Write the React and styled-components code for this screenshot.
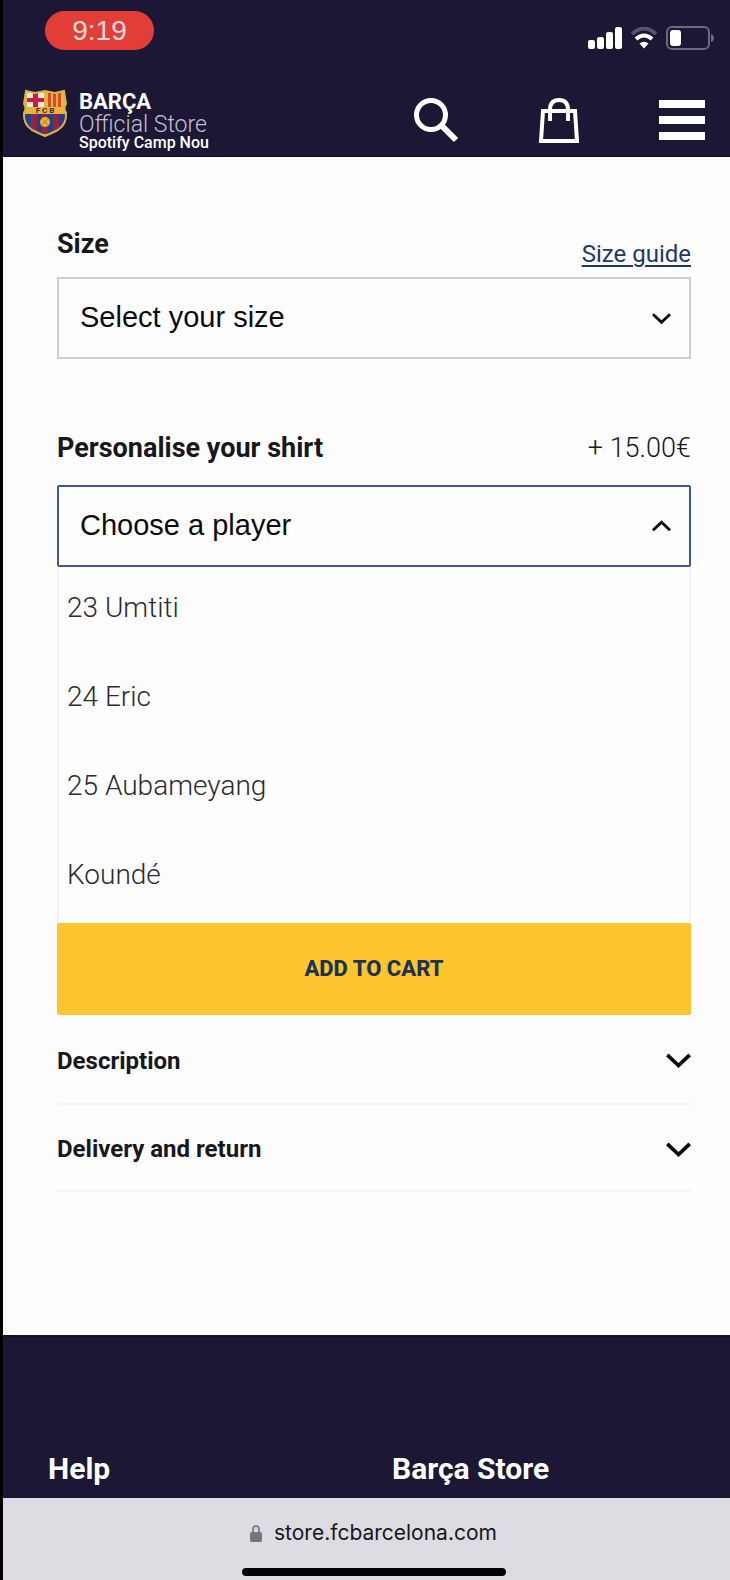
import React, { useState } from "react";
import styled, { createGlobalStyle } from "styled-components";

const GlobalStyle = createGlobalStyle`
  *, *::before, *::after { box-sizing: border-box; }
  body { margin: 0; background: #fefdfe; }
  button, select { font: inherit; color: inherit; border-radius: 0; }
  h2, p, ul { margin: 0; padding: 0; }
`;

const Page = styled.div`
  display: flex;
  flex-direction: column;
  min-height: 100vh;
  border-left: 3px solid #000;
  font-family: Roboto, "Liberation Sans", sans-serif;
  color: #17171c;
`;

const Header = styled.header`
  background: #1b1735;
  color: #fff;
  border-bottom: 1px solid #0d0a22;
`;

const StatusBar = styled.div`
  display: flex;
  justify-content: space-between;
  align-items: flex-end;
  padding: 11px 16px 0 42px;
`;

const Clock = styled.div`
  width: 109px;
  height: 39px;
  border-radius: 20px;
  background: #e33d37;
  color: #ffdcd8;
  font: 500 28px/39px "Liberation Sans", Arial, sans-serif;
  text-align: center;
`;

const StatusIcons = styled.div`
  display: flex;
  align-items: center;
  gap: 8px;
  svg { display: block; }
`;

const NavBar = styled.div`
  display: flex;
  justify-content: space-between;
  align-items: center;
  padding: 38px 25px 4px 18px;
`;

const Brand = styled.a`
  display: flex;
  align-items: flex-start;
  gap: 10px;
  color: inherit;
  text-decoration: none;
`;

const BrandText = styled.span`
  display: flex;
  flex-direction: column;
`;

const BrandLine = styled.span`
  font-size: ${(p) => p.$size}px;
  font-weight: ${(p) => p.$weight};
  line-height: ${(p) => p.$line}px;
  color: ${(p) => p.$color || "#fff"};
  white-space: nowrap;
`;

const NavActions = styled.nav`
  display: flex;
  gap: 77px;
`;

const IconButton = styled.button`
  display: flex;
  justify-content: center;
  align-items: center;
  width: 46px;
  height: 46px;
  padding: 0;
  border: 0;
  background: none;
  color: #fff;
  cursor: pointer;
`;

const Main = styled.main`
  padding: 71px 39px 143px 54px;
`;

const Field = styled.section`
  padding-bottom: ${(p) => p.$space || 0}px;
`;

const FieldHead = styled.div`
  display: flex;
  justify-content: space-between;
  align-items: ${(p) => p.$align || "center"};
  padding-bottom: ${(p) => p.$below}px;
`;

const Label = styled.label`
  font-size: 27px;
  font-weight: 700;
  line-height: 32px;
`;

const Price = styled.span`
  font-size: 27px;
  font-weight: 300;
  line-height: 32px;
`;

const GuideLink = styled.a`
  padding-top: 10px;
  font-size: 24px;
  line-height: 32px;
  color: #1d376d;
  text-decoration: underline;
  text-decoration-thickness: 2px;
  text-underline-offset: 3px;
`;

const SelectBox = styled.div`
  display: grid;
  align-items: center;
  border: 2px solid ${(p) => (p.$open ? "#40598a" : "#cfcdd1")};
  border-radius: ${(p) => (p.$open ? 2 : 0)}px;
  > * { grid-area: 1 / 1; }
  svg {
    justify-self: end;
    margin-right: 18px;
    pointer-events: none;
  }
`;

const Select = styled.select`
  appearance: none;
  width: 100%;
  height: 78px;
  padding: 0 56px 2px 21px;
  border: 0;
  outline: 0;
  background: transparent;
  color: #0b0b0d;
  font: 400 29px/34px "Liberation Sans", Arial, sans-serif;
`;

const PlayerList = styled.ul`
  list-style: none;
  border: solid #f4f2f5;
  border-width: 0 2px;
`;

const PlayerOption = styled.button`
  display: block;
  width: 100%;
  height: 89px;
  padding: 0 8px 8px;
  border: 0;
  background: none;
  color: #2b2b31;
  font-size: 28px;
  font-weight: 300;
  text-align: left;
  cursor: pointer;
`;

const CartButton = styled.button`
  display: block;
  width: 100%;
  height: 92px;
  padding: 0 0 2px;
  border: 0;
  border-radius: 2px;
  background: #fec52e;
  color: #1c3358;
  font-size: 22px;
  font-weight: 800;
  cursor: pointer;
`;

const Accordion = styled.button`
  display: flex;
  justify-content: space-between;
  align-items: center;
  width: 100%;
  height: ${(p) => p.$height}px;
  padding: 3px 0 0;
  border: 0;
  border-bottom: 2px solid #f5f4f6;
  background: none;
  font-size: 24px;
  font-weight: 700;
  cursor: pointer;
`;

const Footer = styled.footer`
  display: grid;
  grid-template-columns: 344px 1fr;
  flex: 1;
  align-items: end;
  padding: 116px 39px 13px 45px;
  border-top: 2px solid #111020;
  background: #1b1735;
  color: #fff;
`;

const FooterTitle = styled.h2`
  font-size: 30px;
  font-weight: 700;
  line-height: 32px;
`;

const BrowserBar = styled.div`
  display: flex;
  flex-direction: column;
  align-items: center;
  gap: 20px;
  padding: 20px 0 5px 14px;
  background: #dedce3;
`;

const Address = styled.p`
  display: flex;
  align-items: center;
  gap: 12px;
  color: #17171a;
  font: 400 21px/30px Inter, sans-serif;
`;

const HomeIndicator = styled.div`
  width: 264px;
  height: 8px;
  border-radius: 4px;
  background: #030306;
`;

const Chevron = ({ width = 19, up = false, stroke = 3 }) => (
  <svg width={width} height={width} viewBox="0 0 20 20" fill="none" aria-hidden="true">
    <path
      d={up ? "M1 14 L10 5.5 L19 14" : "M1 5.5 L10 14 L19 5.5"}
      stroke="#0b0b0d"
      strokeWidth={stroke}
    />
  </svg>
);

const Crest = () => (
  <svg width="48" height="50" viewBox="0 0 48 50" aria-hidden="true">
    <defs>
      <clipPath id="shield">
        <path d="M5 3 L14 5 L24 3 L34 5 L43 3 L45 16 Q42 20 45 25 Q46 36 37 42 Q31 45 24 48 Q17 45 11 42 Q2 36 3 25 Q6 20 3 16 Z" />
      </clipPath>
    </defs>
    <g clipPath="url(#shield)">
      <rect width="48" height="50" fill="#e9b43b" />
      <rect x="6" y="5" width="17" height="14" fill="#f5e8e5" />
      <path d="M12 5h5v14h-5z M6 10h17v4H6z" fill="#d3193d" />
      <path d="M27 5h3v14h-3z M32 5h3v14h-3z M37 5h3v14h-3z" fill="#d44c2b" />
      <rect x="4" y="26" width="40" height="20" fill="#273d86" />
      <path d="M10 26h6v20h-6z M21 26h6v20h-6z M32 26h6v20h-6z" fill="#8e2543" />
      <circle cx="24" cy="34" r="5" fill="#e9b432" />
      <path d="M21 31 L27 37 M27 31 L21 37" stroke="#bd7d28" />
    </g>
    <path
      d="M5 3 L14 5 L24 3 L34 5 L43 3 L45 16 Q42 20 45 25 Q46 36 37 42 Q31 45 24 48 Q17 45 11 42 Q2 36 3 25 Q6 20 3 16 Z"
      fill="none"
      stroke="#d9b24a"
      strokeWidth="2"
    />
    <text x="24" y="25" textAnchor="middle" fontFamily="Roboto, sans-serif" fontSize="8" fontWeight="700" fill="#3a2c1d">
      F C B
    </text>
  </svg>
);

const Signal = () => (
  <svg width="34" height="22" viewBox="0 0 34 22" fill="#fff" aria-hidden="true">
    <rect x="0" y="13" width="7" height="9" rx="2" />
    <rect x="9" y="10" width="7" height="12" rx="2" />
    <rect x="18" y="5" width="7" height="17" rx="2" />
    <rect x="27" y="0" width="7" height="22" rx="2" />
  </svg>
);

const Wifi = () => (
  <svg width="28" height="22" viewBox="0 0 28 22" fill="none" aria-hidden="true">
    <path d="M2 7 Q14 -4 26 7" stroke="#56516c" strokeWidth="4" />
    <path d="M6 12 Q14 5 22 12" stroke="#fff" strokeWidth="4" />
    <path d="M9.500 16.500 Q14 13 18.500 16.500 L14 21.500 Z" fill="#fff" />
  </svg>
);

const Battery = () => (
  <svg width="48" height="24" viewBox="0 0 48 24" fill="none" aria-hidden="true">
    <rect x="1" y="1" width="42" height="22" rx="5" stroke="#6d6981" strokeWidth="2" />
    <rect x="4" y="4" width="11" height="16" rx="3" fill="#fff" />
    <path d="M45 8 Q48 9 48 12 Q48 15 45 16 Z" fill="#6d6981" />
  </svg>
);

const SearchIcon = () => (
  <svg width="46" height="46" viewBox="0 0 46 46" fill="none" stroke="currentColor" aria-hidden="true">
    <circle cx="18" cy="18" r="14.500" strokeWidth="5" />
    <path d="M28 28 L43 43" strokeWidth="6" />
  </svg>
);

const BagIcon = () => (
  <svg width="42" height="46" viewBox="0 0 42 46" fill="none" stroke="currentColor" strokeWidth="4" aria-hidden="true">
    <path d="M5 14 H37 L39 44 H3 Z" />
    <path d="M12 24 V13 Q12 3 21 3 Q30 3 30 13 V24" />
  </svg>
);

const MenuIcon = () => (
  <svg width="46" height="40" viewBox="0 0 46 40" fill="currentColor" aria-hidden="true">
    <path d="M0 0h46v8H0z M0 16h46v8H0z M0 32h46v8H0z" />
  </svg>
);

const LockIcon = () => (
  <svg width="12" height="17" viewBox="0 0 12 17" aria-hidden="true">
    <path d="M3 8 V4.500 Q3 1 6 1 Q9 1 9 4.500 V8" fill="none" stroke="#88868b" strokeWidth="2" />
    <rect y="7" width="12" height="10" rx="2" fill="#77757a" />
  </svg>
);

const players = ["23 Umtiti", "24 Eric", "25 Aubameyang", "Koundé"];

export default function App() {
  const [player, setPlayer] = useState("");

  return (
    <>
      <GlobalStyle />
      <Page>
        <Header>
          <StatusBar>
            <Clock>9:19</Clock>
            <StatusIcons>
              <Signal />
              <Wifi />
              <Battery />
            </StatusIcons>
          </StatusBar>
          <NavBar>
            <Brand href="#home">
              <Crest />
              <BrandText>
                <BrandLine $size={22} $weight={700} $line={28}>BARÇA</BrandLine>
                <BrandLine $size={23} $weight={300} $line={18} $color="#c3c0d2">Official Store</BrandLine>
                <BrandLine $size={16} $weight={500} $line={18}>Spotify Camp Nou</BrandLine>
              </BrandText>
            </Brand>
            <NavActions>
              <IconButton aria-label="Search"><SearchIcon /></IconButton>
              <IconButton aria-label="Shopping bag"><BagIcon /></IconButton>
              <IconButton aria-label="Menu"><MenuIcon /></IconButton>
            </NavActions>
          </NavBar>
        </Header>

        <Main>
          <Field $space={73}>
            <FieldHead $align="flex-start" $below={7}>
              <Label htmlFor="size">Size</Label>
              <GuideLink href="#size-guide">Size guide</GuideLink>
            </FieldHead>
            <SelectBox>
              <Select id="size">
                <option>Select your size</option>
              </Select>
              <Chevron />
            </SelectBox>
          </Field>

          <Field>
            <FieldHead $below={21}>
              <Label htmlFor="player">Personalise your shirt</Label>
              <Price>+ 15.00€</Price>
            </FieldHead>
            <SelectBox $open>
              <Select id="player" value={player} onChange={(e) => setPlayer(e.target.value)}>
                <option value="">Choose a player</option>
                {players.map((name) => (
                  <option key={name}>{name}</option>
                ))}
              </Select>
              <Chevron up />
            </SelectBox>
            <PlayerList>
              {players.map((name) => (
                <li key={name}>
                  <PlayerOption onClick={() => setPlayer(name)}>{name}</PlayerOption>
                </li>
              ))}
            </PlayerList>
          </Field>

          <CartButton>ADD TO CART</CartButton>
          <Accordion $height={90}>
            Description
            <Chevron width={25} />
          </Accordion>
          <Accordion $height={87}>
            Delivery and return
            <Chevron width={25} />
          </Accordion>
        </Main>

        <Footer>
          <FooterTitle>Help</FooterTitle>
          <FooterTitle>Barça Store</FooterTitle>
        </Footer>

        <BrowserBar>
          <Address>
            <LockIcon />
            store.fcbarcelona.com
          </Address>
          <HomeIndicator />
        </BrowserBar>
      </Page>
    </>
  );
}
